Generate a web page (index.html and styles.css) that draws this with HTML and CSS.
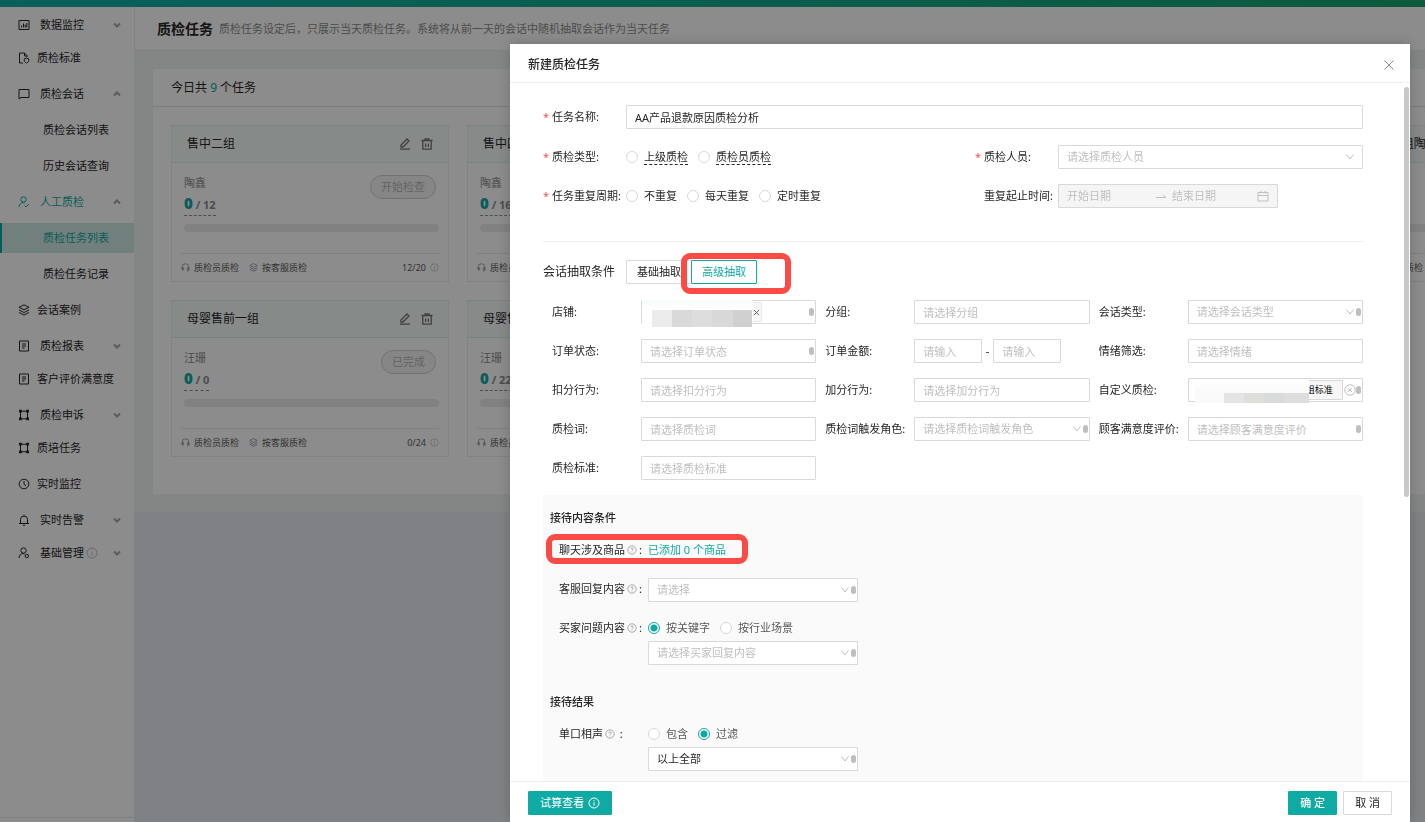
FILE: index.html
```html
<!DOCTYPE html>
<html lang="zh-CN">
<head>
<meta charset="utf-8">
<title>质检任务</title>
<link rel="stylesheet" href="styles.css">
</head>
<body>
<svg class="defs" aria-hidden="true">
  <symbol id="i-down" viewBox="0 0 10 10"><path d="M1.500 2.500L5 7l3.500-4.500"/></symbol>
  <symbol id="i-fold" viewBox="0 0 10 10"><path d="M2 3.500l3 3 3-3"/></symbol>
  <symbol id="i-up" viewBox="0 0 10 10"><path d="M2 6.500l3-3 3 3"/></symbol>
  <symbol id="i-chart" viewBox="0 0 12 12"><path d="M1 1.500h10v9H1zM3.500 8.500v-2M5.500 8.500v-4M7.200 8.500v-3M8.800 8.500V4"/></symbol>
  <symbol id="i-doc" viewBox="0 0 12 12"><path d="M5 11H1.500V1h5L9 3.500V5M6.500 1v3H9"/><path d="M8.500 6l2.200.8v2c0 1-.9 1.700-2.200 2.200-1.300-.5-2.200-1.200-2.200-2.200v-2z"/></symbol>
  <symbol id="i-chat" viewBox="0 0 12 12"><path d="M1 1.500h10v8H3L1 11z"/></symbol>
  <symbol id="i-user" viewBox="0 0 12 12"><circle cx="5.500" cy="3.500" r="2.700"/><path d="M1 11c.2-2.800 1.800-4.300 4-4.500M4.500 6.500c1 0 1.500.3 2 .7M6.500 9.500L8 11l3-3"/></symbol>
  <symbol id="i-layers" viewBox="0 0 12 12"><path d="M6 .8l5 2.500-5 2.500-5-2.500zM1 6l5 2.500L11 6M1 8.500L6 11l5-2.500"/></symbol>
  <symbol id="i-report" viewBox="0 0 12 12"><path d="M1.500 1h9v10h-9zM4 4h4M4 6h4M4 8h2.500"/></symbol>
  <symbol id="i-frame" viewBox="0 0 12 12"><path d="M2.500 2v8M9.500 2v8M2.500 2.200h7M2.500 9.800h7"/><path class="solid" d="M1 .8h2.800v2.800H1zM8.200.8H11v2.800H8.200zM1 8.400h2.800v2.800H1zM8.200 8.400H11v2.800H8.200z"/></symbol>
  <symbol id="i-clock" viewBox="0 0 12 12"><circle cx="6" cy="6" r="4.800"/><path d="M6 3v3.200l2 1.600"/></symbol>
  <symbol id="i-bell" viewBox="0 0 12 12"><path d="M1 9.500h10M2.500 9.500V5.500a3.500 3.500 0 0 1 7 0v4M5 11.300h2M6 .7V2"/></symbol>
  <symbol id="i-userset" viewBox="0 0 12 12"><circle cx="5.500" cy="3.500" r="2.700"/><path d="M1 11c.2-2.800 1.800-4.300 4-4.500M4.500 6.500c1 0 1.500.3 2 .7"/><circle cx="8.800" cy="9" r="1.700"/></symbol>
  <symbol id="i-info" viewBox="0 0 12 12"><circle cx="6" cy="6" r="5"/><path d="M6 5.200v3.500M6 3.200v1"/></symbol>
  <symbol id="i-help" viewBox="0 0 12 12"><circle cx="6" cy="6" r="5"/><path d="M4.500 4.800C4.600 3 7.500 3 7.500 4.800 7.500 5.800 6 5.800 6 7M6 8v1"/></symbol>
  <symbol id="i-edit" viewBox="0 0 12 12"><path d="M1 11.200h10M2 9V7l6-6 2 2-6 6z"/></symbol>
  <symbol id="i-trash" viewBox="0 0 12 12"><path d="M.5 2.500h11M4 2V.8h4V2M1.800 3v8.200h8.400V3M4.600 5.500v3.500M7.400 5.500v3.500"/></symbol>
  <symbol id="i-headset" viewBox="0 0 12 12"><path d="M1.500 9V5.500a4.500 4.500 0 0 1 9 0V9M1.500 6.200h2v3h-2zM8.500 6.200h2v3h-2zM10.500 9c0 1.200-.8 2-2.500 2"/></symbol>
  <symbol id="i-close" viewBox="0 0 12 12"><path d="M1.500 1.500l9 9M10.500 1.500l-9 9"/></symbol>
  <symbol id="i-clear" viewBox="0 0 12 12"><circle cx="6" cy="6" r="5.200"/><path d="M4 4l4 4M8 4L4 8"/></symbol>
  <symbol id="i-arrow" viewBox="0 0 12 12"><path d="M1 7.500h10L8 5"/></symbol>
  <symbol id="i-calendar" viewBox="0 0 12 12"><path d="M1 2.500h10v8.500H1zM1 5.500h10M3.800 1v2.500M8.200 1v2.500"/></symbol>
</svg>

<div class="page">
  <div class="topbar"></div>
  <div class="layout">
    <nav class="sidebar">
      <ul class="menu">
        <li class="sub folded"><a href="#"><svg class="icon"><use href="#i-chart"/></svg><span>数据监控</span><svg class="caret"><use href="#i-fold"/></svg></a></li>
        <li><a href="#"><svg class="icon"><use href="#i-doc"/></svg><span>质检标准</span></a></li>
        <li class="sub"><a href="#"><svg class="icon"><use href="#i-chat"/></svg><span>质检会话</span><svg class="caret"><use href="#i-up"/></svg></a></li>
        <li class="leaf"><a href="#">质检会话列表</a></li>
        <li class="leaf"><a href="#">历史会话查询</a></li>
        <li class="sub open"><a href="#"><svg class="icon"><use href="#i-user"/></svg><span>人工质检</span><svg class="caret"><use href="#i-up"/></svg></a></li>
        <li class="leaf active"><a href="#">质检任务列表</a></li>
        <li class="leaf"><a href="#">质检任务记录</a></li>
        <li><a href="#"><svg class="icon"><use href="#i-layers"/></svg><span>会话案例</span></a></li>
        <li class="sub folded"><a href="#"><svg class="icon"><use href="#i-report"/></svg><span>质检报表</span><svg class="caret"><use href="#i-fold"/></svg></a></li>
        <li><a href="#"><svg class="icon"><use href="#i-report"/></svg><span>客户评价满意度</span></a></li>
        <li class="sub folded"><a href="#"><svg class="icon"><use href="#i-frame"/></svg><span>质检申诉</span><svg class="caret"><use href="#i-fold"/></svg></a></li>
        <li><a href="#"><svg class="icon"><use href="#i-frame"/></svg><span>质培任务</span></a></li>
        <li><a href="#"><svg class="icon"><use href="#i-clock"/></svg><span>实时监控</span></a></li>
        <li class="sub folded"><a href="#"><svg class="icon"><use href="#i-bell"/></svg><span>实时告警</span><svg class="caret"><use href="#i-fold"/></svg></a></li>
        <li class="sub folded"><a href="#"><svg class="icon"><use href="#i-userset"/></svg><span>基础管理</span><svg class="icon faint"><use href="#i-info"/></svg><svg class="caret"><use href="#i-fold"/></svg></a></li>
      </ul>
      <div class="sidebar-foot"></div>
    </nav>

    <main class="main">
      <header class="page-head"><h1>质检任务</h1><p>质检任务设定后，只展示当天质检任务。系统将从前一天的会话中随机抽取会话作为当天任务</p></header>
      <div class="content">
        <section class="panel">
          <h2 class="panel-head">今日共 <em>9</em> 个任务</h2>
          <div class="cards">
            <article class="card">
              <header><h3>售中二组</h3><svg class="icon"><use href="#i-edit"/></svg><svg class="icon"><use href="#i-trash"/></svg></header>
              <div class="card-body"><div><p>陶鑫</p><p class="count"><b>0</b> / 12</p></div><button class="pill" disabled>开始检查</button></div>
              <div class="track"></div>
              <footer><svg class="mini"><use href="#i-headset"/></svg><span>质检员质检</span><svg class="mini"><use href="#i-layers"/></svg><span>按客服质检</span><span class="ratio">12/20</span><svg class="mini faint"><use href="#i-info"/></svg></footer>
            </article>
            <article class="card">
              <header><h3>售中四组</h3><svg class="icon"><use href="#i-edit"/></svg><svg class="icon"><use href="#i-trash"/></svg></header>
              <div class="card-body"><div><p>陶鑫</p><p class="count"><b>0</b> / 16</p></div></div>
              <div class="track"></div>
              <footer><svg class="mini"><use href="#i-headset"/></svg><span>质检员质检</span></footer>
            </article>
            <article class="card"><header></header><div class="card-body"></div><div class="track"></div><footer></footer></article>
            <article class="card"><header></header><div class="card-body"></div><div class="track"></div><footer></footer></article>
            <article class="card">
              <header><h3>售中1组陶鑫</h3></header>
              <div class="card-body"></div>
              <div class="track"></div>
              <footer><svg class="mini"><use href="#i-headset"/></svg><span>质检员质检</span></footer>
            </article>
            <article class="card">
              <header><h3>母婴售前一组</h3><svg class="icon"><use href="#i-edit"/></svg><svg class="icon"><use href="#i-trash"/></svg></header>
              <div class="card-body"><div><p>汪珊</p><p class="count"><b>0</b> / 0</p></div><button class="pill" disabled>已完成</button></div>
              <div class="track"></div>
              <footer><svg class="mini"><use href="#i-headset"/></svg><span>质检员质检</span><svg class="mini"><use href="#i-layers"/></svg><span>按客服质检</span><span class="ratio">0/24</span><svg class="mini faint"><use href="#i-info"/></svg></footer>
            </article>
            <article class="card">
              <header><h3>母婴售前</h3></header>
              <div class="card-body"><div><p>汪珊</p><p class="count"><b>0</b> / 22</p></div></div>
              <div class="track"></div>
              <footer><svg class="mini"><use href="#i-headset"/></svg><span>质检员质检</span></footer>
            </article>
            <article class="card"><header></header><div class="card-body"></div><div class="track"></div><footer></footer></article>
            <article class="card"><header></header><div class="card-body"></div><div class="track"></div><footer></footer></article>
          </div>
        </section>
      </div>
    </main>
  </div>
</div>

<div class="mask"></div>

<section class="drawer" role="dialog" aria-labelledby="drawer-title">
  <header class="drawer-head"><h2 id="drawer-title">新建质检任务</h2><button class="close" aria-label="关闭"><svg class="icon"><use href="#i-close"/></svg></button></header>
  <form class="drawer-body" id="task-form">
    <div class="line">
      <label class="req" for="name">任务名称:</label>
      <input class="box" id="name" type="text" value="AA产品退款原因质检分析">
    </div>
    <div class="pair">
      <div class="line">
        <span class="req">质检类型:</span>
        <div class="radios">
          <label class="hint"><input type="radio" name="type"><span>上级质检</span></label>
          <label class="hint"><input type="radio" name="type"><span>质检员质检</span></label>
        </div>
      </div>
      <div class="line">
        <label class="req" for="staff">质检人员:</label>
        <span class="pick"><select class="box empty" id="staff"><option>请选择质检人员</option></select><svg class="caret"><use href="#i-down"/></svg></span>
      </div>
    </div>
    <div class="pair">
      <div class="line">
        <span class="req">任务重复周期:</span>
        <div class="radios">
          <label><input type="radio" name="cycle"><span>不重复</span></label>
          <label><input type="radio" name="cycle"><span>每天重复</span></label>
          <label><input type="radio" name="cycle"><span>定时重复</span></label>
        </div>
      </div>
      <div class="line">
        <label class="opt" for="from">重复起止时间:</label>
        <div class="box range">
          <input id="from" type="text" placeholder="开始日期" disabled>
          <svg class="icon"><use href="#i-arrow"/></svg>
          <input type="text" aria-label="结束日期" placeholder="结束日期" disabled>
          <svg class="icon"><use href="#i-calendar"/></svg>
        </div>
      </div>
    </div>

    <div class="modes">
      <span class="modes-title">会话抽取条件</span>
      <button type="button">基础抽取</button>
      <span class="marked"><button type="button" class="on">高级抽取</button></span>
    </div>

    <div class="filters">
      <div class="field"><label for="shop">店铺:</label><div class="box tags"><input id="shop" type="text" aria-label="店铺"><span class="mosaic shop"></span><span class="tag"><svg><use href="#i-close"/></svg></span><i class="knob"></i></div></div>
      <div class="field"><label for="group">分组:</label><input class="box" id="group" type="text" placeholder="请选择分组"></div>
      <div class="field"><label for="kind">会话类型:</label><span class="pick"><select class="box empty" id="kind"><option>请选择会话类型</option></select><svg class="caret"><use href="#i-down"/></svg><i class="knob"></i></span></div>

      <div class="field"><label for="order">订单状态:</label><span class="pick"><input class="box" id="order" type="text" placeholder="请选择订单状态"><i class="knob"></i></span></div>
      <div class="field"><label for="min">订单金额:</label><div class="amount"><input class="box" id="min" type="text" placeholder="请输入"><span>-</span><input class="box" type="text" aria-label="最高金额" placeholder="请输入"></div></div>
      <div class="field"><label for="mood">情绪筛选:</label><input class="box" id="mood" type="text" placeholder="请选择情绪"></div>

      <div class="field"><label for="minus">扣分行为:</label><input class="box" id="minus" type="text" placeholder="请选择扣分行为"></div>
      <div class="field"><label for="plus">加分行为:</label><input class="box" id="plus" type="text" placeholder="请选择加分行为"></div>
      <div class="field"><label for="custom">自定义质检:</label><div class="box tags"><input id="custom" type="text" aria-label="自定义质检"><span class="mosaic custom"></span><span class="tag named">组标准</span><svg class="clear"><use href="#i-clear"/></svg><i class="knob"></i></div></div>

      <div class="field"><label for="word">质检词:</label><input class="box" id="word" type="text" placeholder="请选择质检词"></div>
      <div class="field"><label for="role">质检词触发角色:</label><span class="pick"><select class="box empty" id="role"><option>请选择质检词触发角色</option></select><svg class="caret"><use href="#i-down"/></svg><i class="knob"></i></span></div>
      <div class="field"><label for="rate">顾客满意度评价:</label><span class="pick"><input class="box" id="rate" type="text" placeholder="请选择顾客满意度评价"><i class="knob"></i></span></div>

      <div class="field"><label for="std">质检标准:</label><input class="box" id="std" type="text" placeholder="请选择质检标准"></div>
    </div>

    <div class="block">
      <h3>接待内容条件</h3>
      <div class="item goods"><span class="name">聊天涉及商品<svg><use href="#i-help"/></svg>:</span><a href="#">已添加 0 个商品</a></div>
      <div class="item"><label class="name" for="reply">客服回复内容<svg><use href="#i-help"/></svg>:</label><span class="pick"><select class="box empty" id="reply"><option>请选择</option></select><svg class="caret"><use href="#i-down"/></svg><i class="knob"></i></span></div>
      <div class="item"><span class="name">买家问题内容<svg><use href="#i-help"/></svg>:</span>
        <div class="stack">
          <div class="radios soft"><label><input type="radio" name="ask" checked><span>按关键字</span></label><label><input type="radio" name="ask"><span>按行业场景</span></label></div>
          <span class="pick"><select class="box empty" aria-label="买家回复内容"><option>请选择买家回复内容</option></select><svg class="caret"><use href="#i-down"/></svg><i class="knob"></i></span>
        </div>
      </div>
      <h3 class="next">接待结果</h3>
      <div class="item"><span class="name">单口相声<svg><use href="#i-help"/></svg>&nbsp;:</span>
        <div class="stack">
          <div class="radios soft"><label><input type="radio" name="solo"><span>包含</span></label><label><input type="radio" name="solo" checked><span>过滤</span></label></div>
          <span class="pick"><select class="box" aria-label="单口相声范围"><option>以上全部</option></select><svg class="caret"><use href="#i-down"/></svg><i class="knob"></i></span>
        </div>
      </div>
    </div>
  </form>
  <i class="thumb"></i>
  <footer class="drawer-foot">
    <button class="btn primary">试算查看<svg class="icon"><use href="#i-info"/></svg></button>
    <span class="spacer"></span>
    <button class="btn primary strong">确 定</button>
    <button class="btn">取 消</button>
  </footer>
</section>
</body>
</html>
```
FILE: styles.css
```css
* { box-sizing: border-box; }

html, body { height: 100%; }

body {
  margin: 0;
  overflow: hidden;
  background: #e9ecf2;
  color: #262626;
  font: 11px/16px "Noto Sans", "Noto Sans CJK SC", sans-serif;
}

h1, h2, h3, p, ul { margin: 0; padding: 0; }
ul { list-style: none; }
a { color: inherit; text-decoration: none; }
button, input, select { margin: 0; color: inherit; font: inherit; }
svg { flex: none; fill: none; stroke: currentColor; stroke-width: 1; }
.solid { fill: currentColor; stroke: none; }
.defs { position: absolute; width: 0; height: 0; }
.icon { width: 12px; height: 12px; }
.caret { width: 10px; height: 10px; color: #8c8c8c; }
.faint { color: #bfbfbf; }

/* Page behind the drawer */
.page { display: flex; flex-direction: column; height: 100%; }
.topbar { flex: none; height: 7px; background: linear-gradient(90deg, #10b0a8, #16a571); }
.layout { display: flex; flex: 1; min-height: 0; }

.sidebar { display: flex; flex: none; flex-direction: column; justify-content: space-between; width: 134px; background: #fff; }
.menu { padding-top: 3px; }
.menu li { height: 30px; margin-bottom: 6px; }
.menu .folded { margin-bottom: 3px; }
.menu a { display: flex; align-items: center; height: 100%; padding: 0 12px 0 18px; gap: 7px; }
.menu .sub a { gap: 10px; }
.menu .sub .faint { margin-left: -8px; }
.menu .caret { margin-left: auto; stroke-width: 2; color: #a6a6a6; }
.menu .leaf a { padding-left: 43px; }
.menu .open > a { color: #10aaa5; }
.menu .active { background: #cfe9e4; color: #10aaa5; box-shadow: inset 2px 0 #10aaa5; }
.sidebar-foot { height: 5px; border-top: 1px solid #e4e6e6; }

.main { flex: 1; min-width: 0; overflow: hidden; }
.page-head { display: flex; align-items: center; gap: 6px; height: 44px; padding-left: 22px; background: #fff; border-left: 1px solid #eee; border-bottom: 1px solid #e8ecea; }
.page-head h1 { font-size: 14px; line-height: 20px; }
.page-head p { color: #8c8c8c; }
.content { padding: 18px 0 18px 19px; background: #eef5f2; }
.panel { width: max-content; background: #fff; }
.panel-head { height: 38px; padding-left: 18px; border-bottom: 1px solid #e0e4e4; font-size: 12px; font-weight: 400; line-height: 37px; }
.panel-head em { color: #10aaa5; font-style: normal; }
.cards { display: grid; grid-template-columns: repeat(5, 278px); gap: 18px; padding: 18px 18px 37px; }

.card { height: 157px; border: 1px solid #e8eeec; }
.card header { display: flex; align-items: center; gap: 10px; height: 37px; padding: 0 15px; background: #f5fbf9; border-bottom: 1px solid #dcefed; color: #737373; }
.card header svg { stroke-width: 1.3; }
.card h3 { margin-right: auto; color: #262626; font-size: 12px; font-weight: 400; }
.card-body { display: flex; align-items: flex-start; justify-content: space-between; height: 53px; margin: 12px 12px 0; color: #8c8c8c; line-height: 16px; }
.card-body .count { width: max-content; height: 25px; border-bottom: 1px dashed #8c8c8c; font-size: 11px; font-weight: 700; line-height: 24px; }
.count b { color: #10aaa5; font-size: 15px; }
.pill { height: 24px; padding: 0 10px; background: #f5f5f5; border: 1px solid #d0d0d0; border-radius: 12px; color: #b5b5b5; }
.track { height: 8px; margin: -4px 9px 0 12px; background: #ececec; border-radius: 4px; }
.card footer { display: flex; align-items: center; gap: 4px; height: 28px; margin: 21px 9px 0; border-top: 1px solid #e8e8e8; color: #595959; font-size: 9px; }
.card footer span + .mini { margin-left: 6px; }
.card footer .ratio { margin-left: auto; }
.card footer .ratio + .mini { margin-left: 0; }
.mini { width: 9px; height: 9px; color: #8c8c8c; }
.mini.faint { color: #bfbfbf; }

.mask { position: fixed; inset: 0; background: rgba(0, 0, 0, .45); }

/* Drawer */
.drawer { position: fixed; top: 44px; right: 15px; bottom: 0; left: 510px; display: flex; flex-direction: column; background: #fff; box-shadow: 0 0 14px rgba(0, 0, 0, .2); }
.drawer-head { display: flex; flex: none; align-items: center; justify-content: space-between; height: 39px; padding: 4px 15px 0 18px; border-bottom: 1px solid #eee; }
.drawer-head h2 { font-size: 12px; font-weight: 500; }
.close { display: flex; padding: 0; background: none; border: 0; color: #8c8c8c; }
.drawer-body { flex: 1; min-height: 0; overflow: hidden; padding: 22px 47px 0 33px; }
.thumb { position: absolute; top: 43px; right: 1px; width: 5px; height: 410px; background: #c8c8c8; border-radius: 3px; }

.box { display: block; width: 100%; height: 24px; padding: 0 8px; background: #fff; border: 1px solid #d9d9d9; border-radius: 1px; outline: 0; appearance: none; }
.box.empty, ::placeholder { color: #bfbfbf; opacity: 1; }
.pick { position: relative; display: block; width: 100%; }
.pick .caret { position: absolute; top: 7px; right: 8px; color: #bfbfbf; }
.knob { position: absolute; top: 8px; right: 2px; width: 5px; height: 8px; background: #bfbfbf; border-radius: 3px; }
.tags .knob { top: 7px; right: 1px; }

.line { display: flex; align-items: center; height: 24px; }
.line .req, .line .opt { flex: none; width: 83px; padding-left: 9px; }
.line .req::before { content: "*"; float: left; width: 9px; margin-left: -9px; color: #ff4d4f; }
.pair { display: grid; grid-template-columns: 432px 1fr; margin-top: 15px; }
.line + .pair { margin-top: 16px; }

.radios { display: flex; gap: 10px; }
.radios label { display: flex; align-items: center; gap: 6px; }
.radios input { width: 12px; height: 12px; background: #fff; border: 1px solid #d9d9d9; border-radius: 50%; appearance: none; }
.radios input:checked { background: radial-gradient(circle, #10aaa5 3px, #fff 4px); border-color: #10aaa5; }
.radios.soft { color: #595959; }
.hint span { height: 16px; border-bottom: 1px dashed #262626; line-height: 15px; }

.range { display: flex; align-items: center; width: 220px; background: #f5f5f5; color: #bfbfbf; }
.range input { flex: none; width: 88px; padding: 0; background: none; border: 0; }
.range input + svg { margin-right: 5px; }
.range input:last-of-type { width: 85px; }
.range svg:last-child { margin: 0; }

.modes { display: flex; align-items: center; margin-top: 33px; padding-top: 18px; border-top: 1px solid #eee; }
.modes-title { width: 83px; font-size: 12px; }
.modes button { height: 24px; padding: 0 10px; background: #fff; border: 1px solid #d9d9d9; border-radius: 1px; }
.modes .on { border-color: #10aaa5; color: #10aaa5; }
.marked { position: relative; margin-left: -1px; }
.marked::after, .goods::before { content: ""; position: absolute; border: 6px solid #fb4b46; border-radius: 9px; }
.marked::after { inset: -7px -34px -10px -10px; }

.filters { display: grid; grid-template-columns: repeat(3, 1fr); gap: 15px 0; margin-top: 16px; }
.field { display: flex; align-items: center; min-width: 0; height: 24px; }
.field label { flex: none; width: 98px; padding-left: 9px; white-space: nowrap; }
.field > .box, .field > .pick, .amount { flex: 1; width: auto; min-width: 0; }
.amount { display: flex; align-items: center; gap: 4px; padding-right: 29px; }
.amount .box { flex: 1; min-width: 0; }
.tags { position: relative; display: flex; align-items: center; padding: 0; }
.tags input { width: 111px; height: 20px; padding: 0; background: none; border: 0; outline: 0; }
.tag { display: flex; align-items: center; justify-content: center; width: 9px; height: 20px; background: #f7f7f7; border: 1px solid #e8e8e8; border-left: 0; }
.tag svg { width: 7px; height: 7px; stroke-width: 1.500; margin-right: 2px; color: #595959; }
.tags #custom { width: 106px; }
.tag.named { width: 48px; padding-right: 9px; justify-content: flex-end; border-color: #d9d9d9; font-size: 9px; color: #000; white-space: nowrap; }
.clear { width: 12px; height: 12px; margin-left: 1px; color: #bfbfbf; }
.mosaic { position: absolute; }
.mosaic.shop { top: -1px; left: -1px; width: 111px; height: 27px; background: linear-gradient(90deg, #ececec 20px, #d9d9d9 20px 40px, #dddddd 40px 60px, #d8d8d8 60px 81px, #d0d0d0 81px) 11px 10px / 100px 17px no-repeat, linear-gradient(#f8fcfc, #fff 10px) 1px 0 no-repeat; }
.mosaic.custom { top: 1px; left: 6px; width: 114px; height: 23px; background: linear-gradient(90deg, #e4e4e4 20px, #dededb 20px 40px, #d9dbda 40px 60px, #dddddd 60px) 29px 13px / 85px 10px no-repeat, linear-gradient(#fff, #fafafa 12px); }

.block { margin-top: 15px; padding: 15px 7px 60px; background: #fafafa; }
.block h3 { font-size: 11px; font-weight: 500; }
.block .next { margin-top: 29px; }
.item { display: flex; align-items: flex-start; margin-top: 15px; padding-left: 9px; }
.item .name { display: flex; flex: none; align-items: center; gap: 2px; width: 89px; height: 22px; }
.name svg { width: 10px; height: 10px; color: #999; }
.item .pick { width: 210px; }
.item a { color: #10aaa5; line-height: 22px; }
.item.goods { position: relative; margin-top: 13px; }
.item.goods + .item { margin-top: 17px; }
.goods::before { inset: -5px auto -3px -4px; width: 190px; }
.stack { display: flex; flex-direction: column; }
.stack .radios { height: 22px; align-items: center; }
.next + .item { margin-top: 13px; }
.stack .pick { margin-top: 2px; }

.drawer-foot { display: flex; flex: none; align-items: center; gap: 6px; height: 41px; padding: 2px 18px 0; border-top: 1px solid #eee; }
.spacer { flex: 1; }
.btn { display: flex; align-items: center; gap: 4px; height: 24px; padding: 0 11px; background: #fff; border: 1px solid #d9d9d9; border-radius: 1px; white-space: nowrap; }
.btn.primary { background: #10aaa5; border-color: #10aaa5; color: #fff; }
.btn.strong { font-weight: 500; }
```
